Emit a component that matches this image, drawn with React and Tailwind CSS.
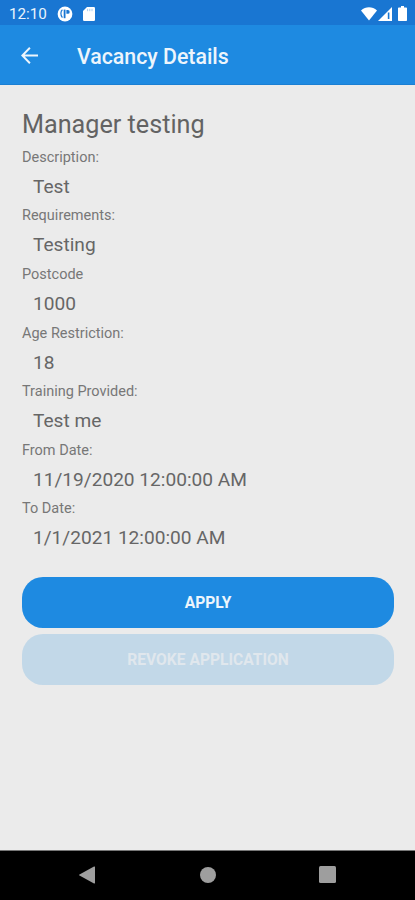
const FIELDS = [
  { label: 'Description:', value: 'Test' },
  { label: 'Requirements:', value: 'Testing' },
  { label: 'Postcode', value: '1000' },
  { label: 'Age Restriction:', value: '18' },
  { label: 'Training Provided:', value: 'Test me' },
  { label: 'From Date:', value: '11/19/2020 12:00:00 AM' },
  { label: 'To Date:', value: '1/1/2021 12:00:00 AM' },
]

function StatusBar() {
  return (
    <div className="flex h-[25px] shrink-0 items-center bg-[#1976d2] pt-[2px] pl-[9px] text-[#e9f3fc]">
      <span className="w-[48px] pt-[2px] text-[15.2px] leading-none whitespace-nowrap">12:10</span>
      <svg className="h-4 w-4" viewBox="0 0 16 16">
        <circle cx="8" cy="8" r="7.4" fill="#fff" />
        <path d="M5.4 3.8C3.6 5 3.2 9.400 5.400 11.600" fill="none" stroke="#1976d2" strokeWidth="1.2" />
        <path d="M7.6 3.6v8.6" fill="none" stroke="#1976d2" strokeWidth="1.8" />
        <path d="M9.4 4h1.4a1.9 1.9 0 0 1 0 3.8H9.4z" fill="#1976d2" />
      </svg>
      <svg className="ml-[10px] h-[14px] w-3" viewBox="0 0 12 14">
        <path d="M4 0h6.8A1.2 1.2 0 0 1 12 1.2v11.6a1.2 1.2 0 0 1-1.2 1.2H1.2A1.2 1.2 0 0 1 0 12.8V4z" fill="#fff" />
        <path d="M4.6 1.8v2.4M6.8 1.8v2.4M9 1.8v2.4" stroke="#a9cdf0" strokeWidth="1" />
      </svg>
      <svg className="ml-auto h-[14px] w-4" viewBox="0 0 16 14">
        <path d="M0 3.6C4.6-.8 11.4-.8 16 3.6L8 13.6z" fill="#fff" />
      </svg>
      <svg className="ml-[1px] h-[14px] w-[14px]" viewBox="0 0 14 14">
        <path d="M0 14 14 0v14z" fill="#fff" />
        <path d="M10.6 5.5V12" stroke="#1976d2" strokeWidth="1.6" />
      </svg>
      <svg className="mr-[8px] ml-[6px] h-[15px] w-[9px]" viewBox="0 0 9 15">
        <path d="M3 0h3v1.5h2.2a.8.8 0 0 1 .8.8v11.9a.8.8 0 0 1-.8.8H.8a.8.8 0 0 1-.8-.8V2.3a.8.8 0 0 1 .8-.8H3z" fill="#fff" />
      </svg>
    </div>
  )
}

function AppBar() {
  return (
    <header className="flex h-[60px] shrink-0 items-center border-b border-[#1a7fd3] bg-[#1e8ae1] pt-[1px] pl-[21px] text-[#edf5fc]">
      <button type="button" aria-label="Back">
        <svg className="h-[17px] w-[17px]" viewBox="0 0 17 17" fill="none" stroke="currentColor" strokeWidth="2">
          <path d="M17 8.5H1.6M8.9.8 1.3 8.5l7.6 7.7" />
        </svg>
      </button>
      <h1 className="ml-[39px] pt-[3px] text-[21.3px] leading-none font-medium">Vacancy Details</h1>
    </header>
  )
}

function Field({ label, value }) {
  return (
    <div className="h-[58.6px]">
      <dt className="h-[22px] text-[14.5px] leading-[22px] text-[#777]">{label}</dt>
      <dd className="pl-[11px] text-[19.1px] leading-[35px] text-[#666]">{value}</dd>
    </div>
  )
}

function NavBar() {
  return (
    <nav className="flex h-[50px] shrink-0 items-center border-t border-[#777] bg-black pb-[2px] pl-[79px]">
      <svg className="h-[18px] w-4" viewBox="0 0 16 18">
        <path d="M16 1v16a.6.6 0 0 1-1 .4L.5 9.6a.7.7 0 0 1 0-1.2L15 .6a.6.6 0 0 1 1 .4z" fill="#9e9e9e" />
      </svg>
      <span className="ml-[105px] h-4 w-4 rounded-full bg-[#9e9e9e]" />
      <span className="ml-[103px] h-[17px] w-[17px] rounded-[1.5px] bg-[#9e9e9e]" />
    </nav>
  )
}

export default function App() {
  return (
    <div className="flex h-[900px] w-[415px] flex-col overflow-hidden bg-[#ebebeb] font-['Roboto',sans-serif]">
      <StatusBar />
      <AppBar />
      <main className="flex-1 px-[22px] pt-[21px]">
        <h2 className="h-[40.9px] text-[25.2px] leading-[38px] text-[#636363]">Manager testing</h2>
        <dl>
          {FIELDS.map((field) => (
            <Field key={field.label} {...field} />
          ))}
        </dl>
        <div className="mt-[19.9px] flex flex-col gap-[6px] text-[15.6px] font-bold">
          <button type="button" className="h-[51px] w-[372px] rounded-[21px] bg-[#1e8ae1] pt-[2px] text-[#edf5fc]">
            APPLY
          </button>
          <button type="button" disabled className="h-[51px] w-[372px] rounded-[21px] bg-[#c2d8e8] pt-[3px] text-[#e0e7ed]">
            REVOKE APPLICATION
          </button>
        </div>
      </main>
      <NavBar />
    </div>
  )
}
